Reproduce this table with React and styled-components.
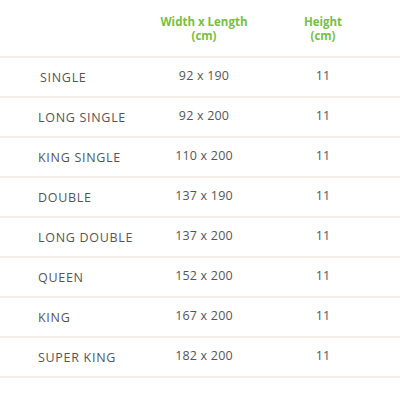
import React from 'react';
import styled, { createGlobalStyle } from 'styled-components';

const GlobalStyle = createGlobalStyle`
  html, body {
    margin: 0;
    padding: 0;
    background: #ffffff;
  }
  body {
    font-family: "Open Sans", "Liberation Sans", sans-serif;
  }
`;

const Table = styled.div`
  width: 400px;
  display: grid;
  grid-template-columns: 150px 108px 142px;
`;

const Row = styled.div`
  display: contents;
`;

const HeadCell = styled.div`
  height: 58px;
  box-sizing: border-box;
  border-bottom: 2px solid #f6eee7;
  display: flex;
  flex-direction: column;
  align-items: center;
  padding-top: 15px;
  padding-right: ${p => p.$shift || 0}px;
  color: #77bf41;
  font-weight: 700;
  font-size: 11.5px;
  line-height: 14px;
  text-align: center;
`;

const Cell = styled.div`
  height: 40px;
  box-sizing: border-box;
  border-bottom: 2px solid #f6eee7;
  display: flex;
  align-items: center;
  justify-content: center;
  padding-bottom: 4px;
  padding-right: ${p => p.$shift || 0}px;
  color: #555555;
  font-size: 12.5px;
  letter-spacing: 0.2px;
  white-space: nowrap;
`;

const NameCell = styled(Cell)`
  justify-content: flex-start;
  padding-bottom: 0;
  padding-left: ${p => p.$indent || 38}px;
  letter-spacing: 0.7px;
`;

const sizes = [
  ['SINGLE', '92 x 190', '11', 40],
  ['LONG SINGLE', '92 x 200', '11'],
  ['KING SINGLE', '110 x 200', '11'],
  ['DOUBLE', '137 x 190', '11'],
  ['LONG DOUBLE', '137 x 200', '11'],
  ['QUEEN', '152 x 200', '11'],
  ['KING', '167 x 200', '11'],
  ['SUPER KING', '182 x 200', '11'],
];

export default function App() {
  return (
    <>
      <GlobalStyle />
      <Table>
        <Row>
          <HeadCell />
          <HeadCell>
            <span>Width x Length</span>
            <span>(cm)</span>
          </HeadCell>
          <HeadCell $shift={12}>
            <span>Height</span>
            <span>(cm)</span>
          </HeadCell>
        </Row>
        {sizes.map(([name, dims, height, indent]) => (
          <Row key={name}>
            <NameCell $indent={indent}>{name}</NameCell>
            <Cell>{dims}</Cell>
            <Cell $shift={12}>{height}</Cell>
          </Row>
        ))}
      </Table>
    </>
  );
}
